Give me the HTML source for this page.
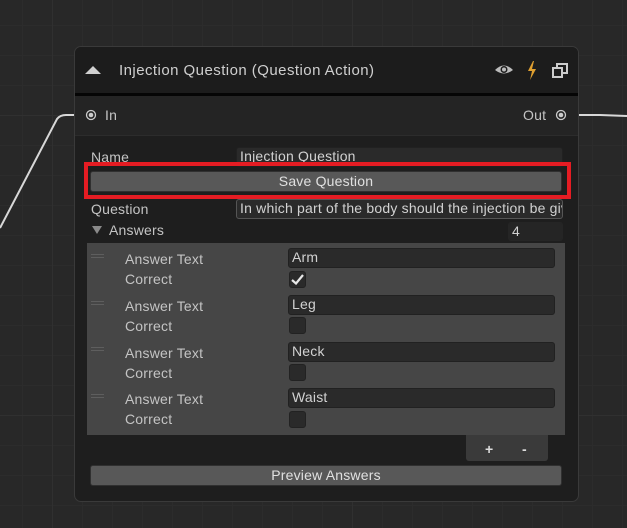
<!DOCTYPE html>
<html><head><style>
*{box-sizing:border-box;margin:0;padding:0}
body{width:627px;height:528px;overflow:hidden;background:#282828;font-family:"Liberation Sans",sans-serif;position:relative;
background-image:linear-gradient(#303030 1px,transparent 1px),linear-gradient(90deg,#303030 1px,transparent 1px),linear-gradient(#2c2c2c 1px,transparent 1px),linear-gradient(90deg,#2c2c2c 1px,transparent 1px);
background-size:300px 300px,300px 300px,30px 30px,30px 30px;background-position:0 115px,52px 0,0 25px,22px 0}
.a{position:absolute}
.t{position:absolute;color:#c4c4c4;font-size:14px;line-height:16px;letter-spacing:0.2px;white-space:nowrap}
.f{position:absolute;background:#2a2a2a;border:1px solid #212121;border-radius:3px;color:#d2d2d2;font-size:14px;line-height:17px;padding-left:3px;white-space:nowrap;overflow:hidden;letter-spacing:0.2px}
.btn{position:absolute;background:#585858;border:1px solid #303030;border-radius:3px;color:#e0e0e0;font-size:14px;text-align:center;letter-spacing:0.2px}
.cb{position:absolute;width:17px;height:17px;background:#2a2a2a;border:1px solid #222;border-radius:3px}
.h{position:absolute;left:91px;width:13px;height:4px;border-top:1px solid #5e5e5e;border-bottom:1px solid #5e5e5e}
</style></head><body>
<svg class="a" style="left:0;top:0" width="627" height="528"><path d="M0 228 L57 119 Q60 115 66 115 L76 115" stroke="#d8d8d8" stroke-width="2" fill="none"/><path d="M576 115 L600 115 L627 116" stroke="#d8d8d8" stroke-width="2" fill="none"/></svg>
<div class="a" style="left:74px;top:46px;width:505px;height:456px;background:#1e1e1e;border:1px solid #3a3a3a;border-radius:7px;overflow:hidden">
 <div class="a" style="left:0;top:0;width:505px;height:46px;background:#1c1c1c"></div>
 <div class="a" style="left:0;top:46px;width:505px;height:3px;background:#050505"></div>
 <div class="a" style="left:0;top:49px;width:505px;height:40px;background:#242424;border-bottom:1px solid #2c2c2c"></div>
</div>
<svg class="a" style="left:85px;top:65px" width="16" height="10"><path d="M0 9 L8 1 L16 9Z" fill="#d0d0d0"/></svg>
<div class="t" style="left:119px;top:62px;font-size:15px;line-height:18px;color:#cfcfcf;letter-spacing:0.45px">Injection Question (Question Action)</div>
<svg class="a" style="left:494px;top:61px" width="20" height="18"><path d="M1 9 Q10 0 19 9 Q10 16 1 9Z" fill="#bbb"/><circle cx="10" cy="8.5" r="3.5" fill="#1c1c1c"/><circle cx="10" cy="8.5" r="2" fill="#bbb"/></svg>
<svg class="a" style="left:526px;top:60px" width="12" height="22"><path d="M7 1 L2 11 L6 11 L4 20 L10 9 L6 9 L8 1Z" fill="#e0a030"/></svg>
<svg class="a" style="left:551px;top:62px" width="18" height="18"><rect x="2" y="6" width="9" height="9" fill="none" stroke="#ccc" stroke-width="2"/><path d="M6 6 V2 H16 V11 H11" fill="none" stroke="#ccc" stroke-width="2"/></svg>
<svg class="a" style="left:85px;top:109px" width="12" height="12"><circle cx="6" cy="6" r="4.5" fill="none" stroke="#ccc" stroke-width="1.3"/><circle cx="6" cy="6" r="2.3" fill="#ccc"/></svg>
<div class="t" style="left:105px;top:107px">In</div>
<div class="t" style="left:523px;top:107px">Out</div>
<svg class="a" style="left:555px;top:109px" width="12" height="12"><circle cx="6" cy="6" r="4.5" fill="none" stroke="#ccc" stroke-width="1.3"/><circle cx="6" cy="6" r="2.3" fill="#ccc"/></svg>
<div class="t" style="left:91px;top:149px">Name</div>
<div class="f" style="left:236px;top:147px;width:327px;height:20px">Injection Question</div>
<div class="a" style="left:84px;top:162px;width:487px;height:37px;border:4px solid #e51c23"></div>
<div class="btn" style="left:90px;top:171px;width:472px;height:21px;line-height:19px">Save Question</div>
<div class="t" style="left:91px;top:201px">Question</div>
<div class="f" style="left:236px;top:199px;width:327px;height:20px;border-color:#555">In which part of the body should the injection be given?</div>
<svg class="a" style="left:92px;top:225px" width="11" height="10"><path d="M0 1 L10 1 L5 9Z" fill="#8a8a8a"/></svg>
<div class="t" style="left:109px;top:222px">Answers</div>
<div class="f" style="left:508px;top:222px;width:55px;height:19px;background:#252525;border-color:#252525">4</div>
<div class="a" style="left:87px;top:243px;width:478px;height:192px;background:#464646"></div>
<div class="h" style="top:254px"></div><div class="h" style="top:301px"></div><div class="h" style="top:347px"></div><div class="h" style="top:394px"></div>
<div class="t" style="left:125px;top:251px">Answer Text</div><div class="t" style="left:125px;top:271px">Correct</div>
<div class="t" style="left:125px;top:298px">Answer Text</div><div class="t" style="left:125px;top:318px">Correct</div>
<div class="t" style="left:125px;top:345px">Answer Text</div><div class="t" style="left:125px;top:365px">Correct</div>
<div class="t" style="left:125px;top:391px">Answer Text</div><div class="t" style="left:125px;top:411px">Correct</div>
<div class="f" style="left:288px;top:248px;width:267px;height:20px">Arm</div>
<div class="f" style="left:288px;top:295px;width:267px;height:20px">Leg</div>
<div class="f" style="left:288px;top:342px;width:267px;height:20px">Neck</div>
<div class="f" style="left:288px;top:388px;width:267px;height:20px">Waist</div>
<div class="cb" style="left:289px;top:271px"></div>
<svg class="a" style="left:291px;top:274px" width="13" height="11"><path d="M1 6 L5 9.5 L12 1" stroke="#e8e8e8" stroke-width="2.2" fill="none"/></svg>
<div class="cb" style="left:289px;top:317px"></div>
<div class="cb" style="left:289px;top:364px"></div>
<div class="cb" style="left:289px;top:411px"></div>
<div class="a" style="left:466px;top:435px;width:82px;height:26px;background:#3a3a3a;border-radius:0 0 3px 3px"></div>
<div class="t" style="left:485px;top:441px;color:#ddd;font-weight:bold">+</div>
<div class="t" style="left:522px;top:441px;color:#ddd;font-weight:bold">-</div>
<div class="btn" style="left:90px;top:465px;width:472px;height:21px;line-height:19px">Preview Answers</div>
</body></html>
